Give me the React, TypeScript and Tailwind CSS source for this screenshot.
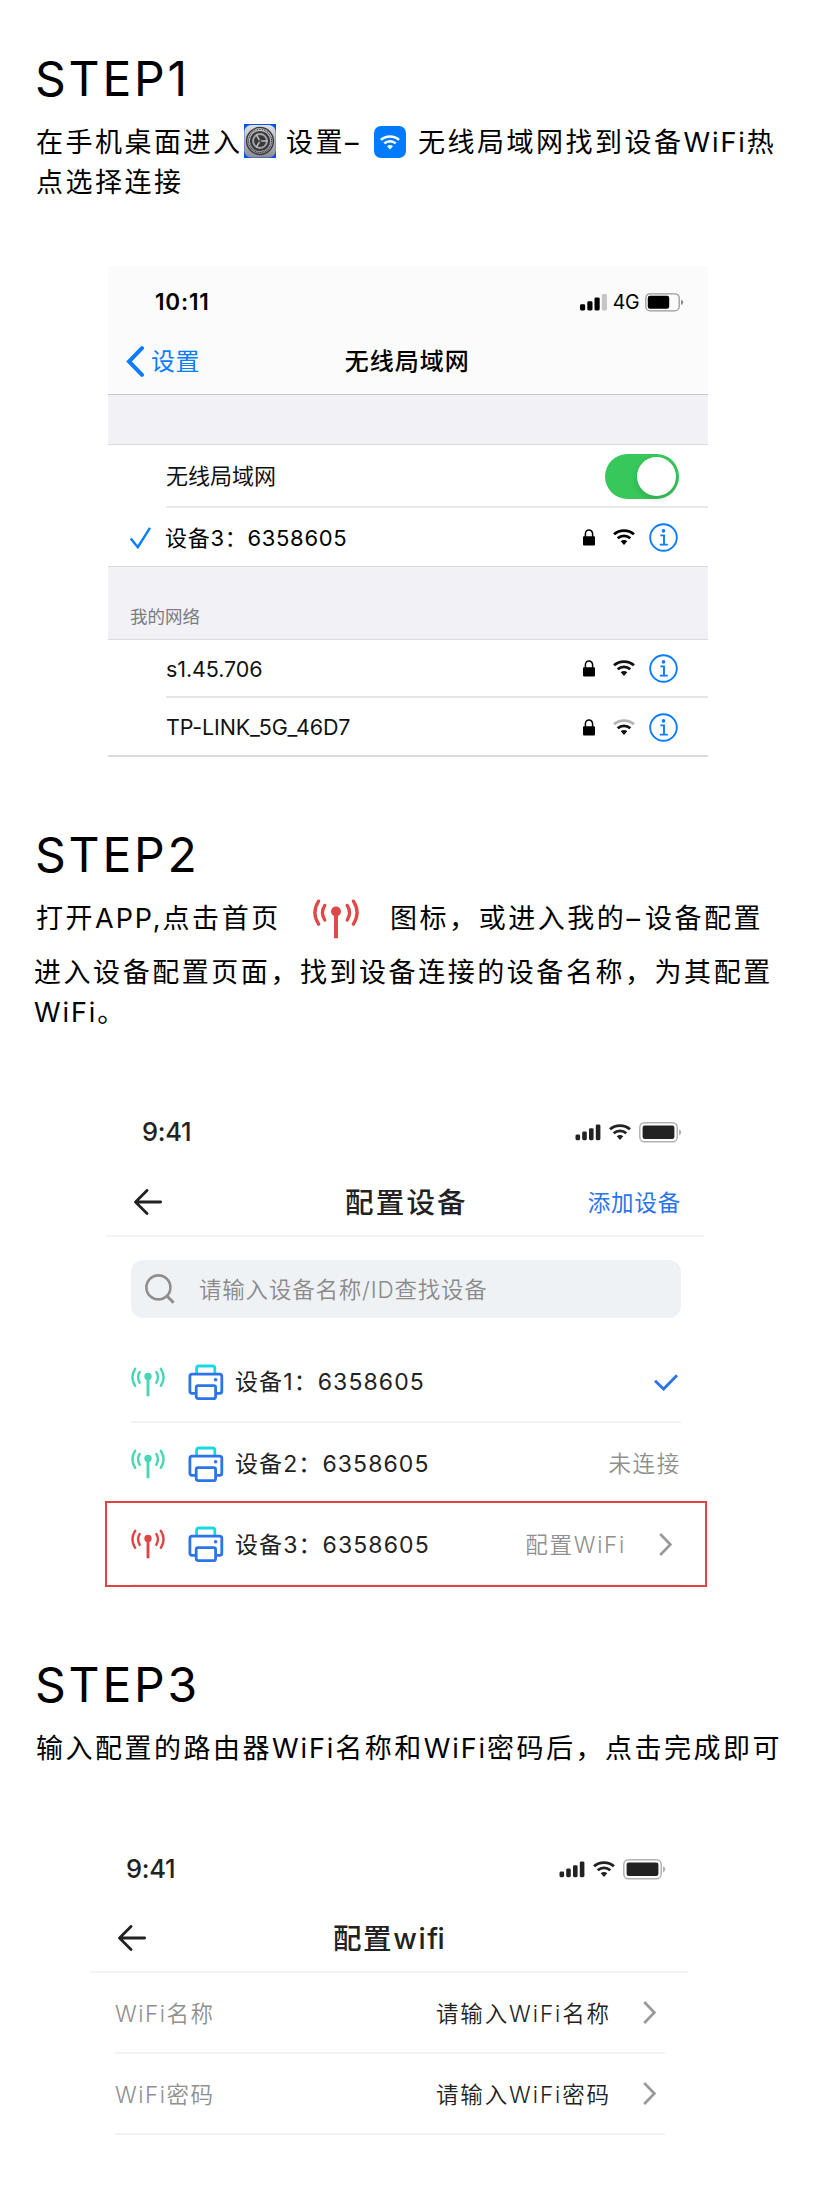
import type { ReactNode } from "react";

function Signal({ className, fourthClass = "", wide = false }: { className: string; fourthClass?: string; wide?: boolean }) {
  return wide ? (
    <svg viewBox="0 0 27 17" className={className} fill="currentColor">
      <rect x="0" y="10.3" width="5.2" height="6.2" rx="1.4" />
      <rect x="7.3" y="7.3" width="5.2" height="9.2" rx="1.4" />
      <rect x="14.5" y="3.6" width="5.2" height="12.9" rx="1.4" />
      <rect x="21.8" y="0" width="5.2" height="16.5" rx="1.4" className={fourthClass} />
    </svg>
  ) : (
    <svg viewBox="0 0 26 17" className={className} fill="currentColor">
      <rect x="0.5" y="10.6" width="4.6" height="5.6" rx="1.4" />
      <rect x="7.2" y="7.5" width="4.6" height="8.7" rx="1.4" />
      <rect x="14" y="4.2" width="4.6" height="12" rx="1.4" />
      <rect x="20.8" y="0.4" width="4.6" height="15.8" rx="1.4" />
    </svg>
  );
}

function Wifi({ className, outerClass = "" }: { className: string; outerClass?: string }) {
  return (
    <svg viewBox="0 0 22 16.5" className={className} fill="none" stroke="currentColor" strokeWidth="2.7">
      <path d="M1 5.3C6.6 0.3 15.4 0.3 21 5.3" className={outerClass} />
      <path d="M4.7 9.3C8.3 6 13.7 6 17.3 9.3" />
      <path d="M7.7 12.3C9.6 10.7 12.4 10.7 14.3 12.3L11 16Z" fill="currentColor" stroke="none" />
    </svg>
  );
}

function Battery() {
  return (
    <svg viewBox="0 0 43 21" className="h-[21px] w-[43px]">
      <rect x="0.8" y="0.8" width="37.4" height="19" rx="4.6" fill="none" stroke="#b2b2b2" strokeWidth="1.5" />
      <rect x="3.6" y="3.6" width="31.8" height="13.4" rx="2.2" fill="#222" />
      <path d="M40 7.2Q42.3 8.2 42.3 10.3T40 13.4Z" fill="#b2b2b2" />
    </svg>
  );
}

function Lock() {
  return (
    <svg viewBox="0 0 12 17" className="h-[17px] w-3">
      <path d="M2.4 8V4.8a3.6 3.8 0 0 1 7.2 0V8" fill="none" stroke="#000" strokeWidth="1.5" />
      <rect x="0" y="7.2" width="12" height="9.3" rx="1" fill="#000" />
    </svg>
  );
}

function Info() {
  return (
    <svg viewBox="0 0 29 29" className="size-[29px]" fill="none" stroke="#0b7dff">
      <circle cx="14.5" cy="14.5" r="13.3" strokeWidth="1.9" />
      <circle cx="14.5" cy="7.9" r="1.8" fill="#0b7dff" stroke="none" />
      <path d="M11.4 12.4h3.6v9M10.8 21.6h8" strokeWidth="1.9" />
    </svg>
  );
}

function Antenna({ className }: { className: string }) {
  return (
    <svg viewBox="0 0 46 40" className={className} fill="none" stroke="currentColor" strokeLinecap="round" strokeWidth="3.3">
      <circle cx="23" cy="12.5" r="5" fill="currentColor" stroke="none" />
      <path d="M23 13V39.3" strokeWidth="3.9" strokeLinecap="butt" />
      <path d="M11.8 6.4Q7.2 13.5 11.8 21M34.2 6.4Q38.8 13.5 34.2 21" />
      <path d="M5.6 2.2Q-1.8 13.5 5.6 25.2M40.4 2.2Q47.8 13.5 40.4 25.2" />
    </svg>
  );
}

function Printer() {
  return (
    <svg viewBox="0 0 36 36" className="size-9" fill="none" stroke="#2b74ea" strokeWidth="2.8" strokeLinejoin="round">
      <path d="M8.6 10V4.2Q8.6 2 10.8 2H24.6Q26.8 2 26.8 4.2V10" stroke="#17d8e4" />
      <path d="M7.2 29.4H4Q1.9 29.4 1.9 27.3V12.2Q1.9 10.1 4 10.1H31.6Q33.8 10.1 33.8 12.2V27.3Q33.8 29.4 31.6 29.4H28.4" />
      <path d="M10 21.6H26Q27.6 21.6 27.6 23.4V32.4Q27.6 34.6 25.4 34.6H10.4Q8.2 34.6 8.2 32.4V23.4Q8.2 21.6 10 21.6Z" />
      <circle cx="27.6" cy="15.8" r="1.8" fill="#2b74ea" stroke="none" />
    </svg>
  );
}

function BackArrow() {
  return (
    <svg viewBox="0 0 28 26" className="h-[26px] w-7" fill="none" stroke="#222" strokeWidth="2.8" strokeLinecap="round" strokeLinejoin="round">
      <path d="M13 1.4L1.5 13L13 24.6M1.8 13H26.6" />
    </svg>
  );
}

function Chevron() {
  return (
    <svg viewBox="0 0 13 23" className="h-[23px] w-[13px]" fill="none" stroke="#999" strokeWidth="2.7">
      <path d="M1.2 1L11.4 11.5L1.2 22" />
    </svg>
  );
}

function SettingsIcon() {
  return (
    <svg viewBox="0 0 32 34" className="mb-1 h-[34px] w-8">
      <defs>
        <linearGradient id="metal" x1="0" y1="0" x2="0" y2="1">
          <stop offset="0" stopColor="#e0e1e4" />
          <stop offset="1" stopColor="#8b8b90" />
        </linearGradient>
      </defs>
      <rect width="32" height="34" fill="#0b55e2" />
      <rect x="0.3" y="1" width="31.4" height="32.6" rx="7" fill="url(#metal)" />
      <circle cx="16" cy="17" r="13.4" fill="none" stroke="#3c3c40" strokeWidth="1.5" />
      <circle cx="16" cy="17" r="11.5" fill="none" stroke="#3c3c40" strokeWidth="1.2" strokeDasharray="1 0.7" />
      <circle cx="16" cy="17" r="9" fill="#a5a5a9" stroke="#38383b" strokeWidth="2.2" />
      <circle cx="16" cy="17" r="6" fill="#38383b" />
      <path d="M16 17L12.2 10.6M16 17H23.6M16 17L12.2 23.4" stroke="#c0c0c4" strokeWidth="1.5" />
      <circle cx="16" cy="17" r="1.6" fill="#55555a" />
    </svg>
  );
}

function Heading({ children }: { children: ReactNode }) {
  return <h2 className="pl-[35px] text-[48px] leading-[48px] font-[390] tracking-[2.8px]">{children}</h2>;
}

function Latin({ children }: { children: ReactNode }) {
  return <span className="tracking-[1.9px]">{children}</span>;
}

function AppStatus() {
  return (
    <div className="flex h-10 items-center pr-[22px] pl-9 text-[#222]">
      <span className="pt-px text-[25.5px] font-medium tracking-[-0.3px]">9:41</span>
      <Signal className="ml-auto h-[17px] w-[26px]" />
      <Wifi className="ml-2 h-[16.5px] w-[22px]" />
      <span className="ml-2"><Battery /></span>
    </div>
  );
}

function NetworkIcons({ weak = false }: { weak?: boolean }) {
  return (
    <div className="ml-auto flex items-center pt-px pr-[30px]">
      <Lock />
      <Wifi className="ml-[18px] h-[16.5px] w-[22px]" outerClass={weak ? "stroke-[#b4b4b4]" : ""} />
      <span className="ml-[14px]"><Info /></span>
    </div>
  );
}

function Device({ name, online = true, children }: { name: string; online?: boolean; children: ReactNode }) {
  return (
    <>
      <Antenna className={online ? "h-[30px] w-[34px] text-[#47d7b5]" : "h-[30px] w-[34px] text-[#e04545]"} />
      <span className="ml-[23px]"><Printer /></span>
      <span className="ml-[11px] pt-[2px] text-[23px] font-[370] tracking-[1.1px] text-[#222]">{name}</span>
      <div className="ml-auto flex items-center pt-px text-[22.5px] font-[350] tracking-[1.7px] text-[#909090]">{children}</div>
    </>
  );
}

function Field({ label, value }: { label: string; value: string }) {
  return (
    <div className="ml-[25px] flex h-[81px] w-[550px] items-center border-b-2 border-[#f2f2f2] pr-[9px] text-[22.5px] font-[350]">
      <span className="pt-[2px] tracking-[1.5px] text-[#909090]">{label}</span>
      <span className="mr-[32px] ml-auto pt-[2px] tracking-[1.9px] text-[#222]">{value}</span>
      <Chevron />
    </div>
  );
}

export default function App() {
  return (
    <main className="flex h-[2207px] w-[827px] flex-col overflow-hidden bg-white pt-[55px] font-['Inter','Noto_Sans_CJK_SC',sans-serif] whitespace-nowrap text-black">
      <section>
        <Heading>STEP1</Heading>
        <div className="mt-5 pl-9 text-[27px] leading-10 font-[370] tracking-[2.5px]">
          <div className="flex h-10 items-center">
            <span className="w-52">在手机桌面进入</span>
            <SettingsIcon />
            <span className="ml-[10px] w-[88px]">设置–</span>
            <span className="mb-[2px] flex size-8 items-center justify-center rounded-[7px] bg-[#007aff] text-white">
              <Wifi className="h-[15px] w-5" />
            </span>
            <span className="ml-3">无线局域网找到设备<Latin>WiFi</Latin>热</span>
          </div>
          <p>点选择连接</p>
        </div>
      </section>

      <section className="mt-[63px] ml-[108px] w-[600px]">
        <div className="h-[128px] bg-[#fbfbfc]">
          <div className="flex h-[72px] items-center pr-6 pl-[47px]">
            <span className="text-[22.5px] font-semibold tracking-[0.8px]">10:11</span>
            <Signal wide className="ml-auto h-[17px] w-[27px]" fourthClass="fill-[#c6c6c7]" />
            <span className="ml-[6px] pt-px text-[19.5px] tracking-[-0.5px]">4G</span>
            <svg viewBox="0 0 39 19" className="ml-[6px] h-[19px] w-[39px]">
              <rect x="0.8" y="0.8" width="33.4" height="17" rx="4.3" fill="none" stroke="#9a9a9b" strokeWidth="1.3" />
              <rect x="2.8" y="2.8" width="21.4" height="13" rx="2.2" fill="#000" />
              <path d="M36 6.5Q38.3 7.4 38.3 9.3T36 12.1Z" fill="#8c8c8d" />
            </svg>
          </div>
          <div className="flex h-[47px] items-center pl-[18px]">
            <svg viewBox="0 0 19 31" className="h-[31px] w-[19px]" fill="none" stroke="#0a7cff" strokeWidth="4" strokeLinecap="round">
              <path d="M16 2.2L3 15.5L16 28.8" />
            </svg>
            <span className="ml-[6px] pt-px text-2xl tracking-[0.4px] text-[#0a7cff]">设置</span>
            <span className="ml-[145px] pt-px text-2xl font-medium tracking-[1px]">无线局域网</span>
          </div>
        </div>
        <div className="h-[51px] border-t border-b border-t-[#c6c6c9] border-b-[#dcdcde] bg-[#f1f1f6]" />
        <div className="ml-[58px] flex h-[63px] items-center border-b-2 border-[#e9e9ea]">
          <span className="pt-[2px] text-[22px] text-[#111]">无线局域网</span>
          <span className="mt-px mr-[29px] ml-auto flex h-[45px] w-[74px] items-center justify-end rounded-full bg-[#37c75b] pr-[3px]">
            <span className="size-[39px] rounded-full bg-white shadow-[0_3px_6px_rgba(0,0,0,0.15)]" />
          </span>
        </div>
        <div className="flex h-[58px] items-center pl-[22px]">
          <svg viewBox="0 0 21 22" className="mt-px h-[22px] w-[21px]" fill="none" stroke="#0a7cff" strokeWidth="2.4">
            <path d="M0.8 11.5L7.8 20.2L20 0.8" />
          </svg>
          <span className="ml-[14px] pt-[2px] text-[22px] font-[370] tracking-[0.7px]">设备3：6358605</span>
          <NetworkIcons />
        </div>
        <div className="flex h-[74px] items-end border-t border-b border-t-[#d9d9db] border-b-[#dcdcde] bg-[#f1f1f6] pb-2 pl-[22px]">
          <span className="text-[17.5px] leading-[28px] text-[#7b7b80]">我的网络</span>
        </div>
        <div className="ml-[58px] flex h-[58px] items-center border-b-2 border-[#e6e6e7] text-[21.5px] tracking-[-0.1px] text-[#111]">
          <span className="pt-[2px]">s1.45.706</span>
          <NetworkIcons />
        </div>
        <div className="flex h-[59px] items-center border-b-2 border-[#dcdcde] pl-[58px] text-[21.5px] tracking-[-0.15px] text-[#111]">
          <span className="pt-[2px]">TP-LINK_5G_46D7</span>
          <NetworkIcons weak />
        </div>
      </section>

      <section className="mt-[74px]">
        <Heading>STEP2</Heading>
        <div className="mt-5 text-[27px] leading-10 font-[370] tracking-[2.55px]">
          <div className="flex h-10 items-center pl-9">
            <span className="w-[277px]">打开<Latin>APP,</Latin>点击首页</span>
            <Antenna className="h-10 w-[46px] text-[#e04848]" />
            <span className="ml-[31px]">图标，或进入我的<span className="tracking-[5px]">–</span>设备配置</span>
          </div>
          <p className="mt-[14px] pl-[34px]">进入设备配置页面，找到设备连接的设备名称，为其配置</p>
          <p className="pl-[34px]"><Latin>WiFi</Latin>。</p>
        </div>
      </section>

      <section className="mt-[79px] w-[827px]">
        <div className="ml-[106px] w-[598px]">
          <AppStatus />
          <div className="mt-[25px] flex h-[60px] items-start border-b-2 border-[#f3f3f3] pr-[23px] pl-7">
            <div className="flex h-[50px] grow items-center">
              <BackArrow />
              <span className="ml-[183px] pt-[2px] text-[28.5px] font-medium tracking-[2.2px] text-[#222]">配置设备</span>
              <span className="ml-auto pt-[2px] text-[22.5px] tracking-[0.8px] text-[#2b74ea]">添加设备</span>
            </div>
          </div>
          <div className="mt-[23px] ml-[25px] flex h-[58px] w-[550px] items-center rounded-xl bg-[#eff2f5] pl-[14px]">
            <svg viewBox="0 0 30 30" className="size-[30px]" fill="none" stroke="#8e8e8e" strokeWidth="2.6">
              <circle cx="13.4" cy="13.4" r="12" />
              <path d="M21.5 21.5L28.6 28.8" strokeWidth="3" />
            </svg>
            <span className="ml-[24px] pt-[2px] text-[22.5px] font-[350] tracking-[0.8px] text-[#8a8a8a]">请输入设备名称/ID查找设备</span>
          </div>
          <div className="mt-6 ml-[25px] flex h-[81px] w-[550px] items-center border-b-2 border-[#f2f2f2] pr-[3px]">
            <Device name="设备1：6358605">
              <svg viewBox="0 0 24 17" className="h-[17px] w-6" fill="none" stroke="#2b74ea" strokeWidth="2.9">
                <path d="M1 6.8L9.6 15L23 1.2" />
              </svg>
            </Device>
          </div>
          <div className="ml-[25px] flex h-[78px] w-[550px] items-center pt-[3px]">
            <Device name="设备2：6358605">未连接</Device>
          </div>
        </div>
        <div className="ml-[105px] h-[86px] w-[602px] border-2 border-[#de4444] pl-6">
          <div className="flex h-[82px] w-[550px] items-center border-b border-[#f2f2f2] pt-px pr-[9px]">
            <Device name="设备3：6358605" online={false}>
              <span className="mr-[33px]">配置WiFi</span>
              <Chevron />
            </Device>
          </div>
        </div>
      </section>

      <section className="mt-[74px]">
        <Heading>STEP3</Heading>
        <p className="mt-5 pl-9 text-[27px] leading-10 font-[370] tracking-[2.5px]">
          输入配置的路由器<Latin>WiFi</Latin>名称和<Latin>WiFi</Latin>密码后，点击完成即可
        </p>
      </section>

      <section className="mt-20 ml-[90px] w-[598px]">
        <AppStatus />
        <div className="mt-6 flex h-[60px] items-start border-b-2 border-[#f3f3f3] pl-7">
          <div className="flex h-[50px] items-center">
            <BackArrow />
            <span className="ml-[187px] pt-[2px] text-[28.5px] font-medium tracking-[1.6px] text-[#222]">
              配置wi<span className="tracking-[-0.5px]">fi</span>
            </span>
          </div>
        </div>
        <Field label="WiFi名称" value="请输入WiFi名称" />
        <Field label="WiFi密码" value="请输入WiFi密码" />
      </section>
    </main>
  );
}
